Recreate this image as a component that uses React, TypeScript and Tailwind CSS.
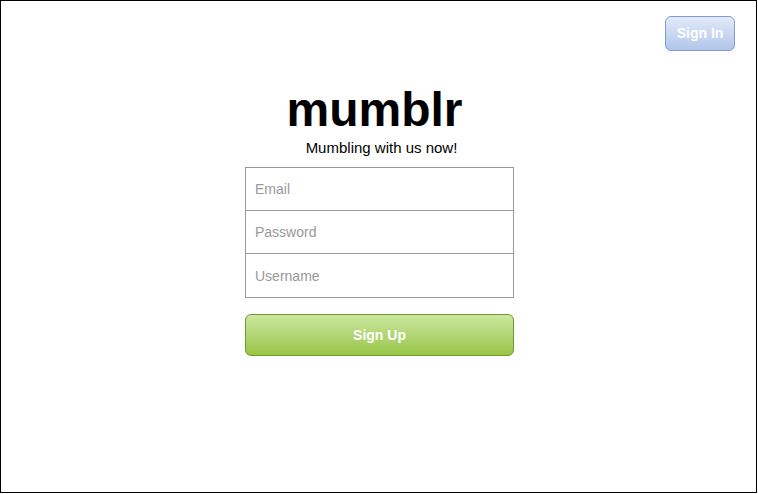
export default function App() {
  return (
    <div className="w-[758px] h-[494px] bg-white" style={{ fontFamily: '"Liberation Sans", Arial, sans-serif' }}>
      <div className="w-[757px] h-[493px] border border-black flex flex-col">
        <div className="flex justify-end pt-[15px] pr-[21px]">
          <button className="w-[70px] h-[35px] rounded-[6px] border border-[#7f9bd2] bg-gradient-to-b from-[#e3eaf9] to-[#b2c5ea] text-white font-bold text-[14px]">
            Sign In
          </button>
        </div>
        <div className="flex flex-col items-center">
          <h1 className="mt-[31px] text-[48px] leading-[56px] font-bold text-black -ml-[8px]">mumblr</h1>
          <p className="mt-[1px] ml-[6px] text-[15px] leading-[17px] text-black">Mumbling with us now!</p>
          <div className="mt-[11px] w-[269px] border border-[#999] flex flex-col ml-[2px]">
            <input placeholder="Email" className="h-[43px] px-[9px] text-[14px] border-b border-[#999] outline-none placeholder:text-[#999]" />
            <input placeholder="Password" className="h-[43px] px-[9px] text-[14px] border-b border-[#999] outline-none placeholder:text-[#999]" />
            <input placeholder="Username" className="h-[43px] px-[9px] text-[14px] outline-none placeholder:text-[#999]" />
          </div>
          <button className="mt-[16px] ml-[2px] w-[269px] h-[42px] rounded-[6px] border border-[#6f9a2c] bg-gradient-to-b from-[#cbe79e] to-[#98c544] text-white font-bold text-[14px]">
            Sign Up
          </button>
        </div>
      </div>
    </div>
  );
}
